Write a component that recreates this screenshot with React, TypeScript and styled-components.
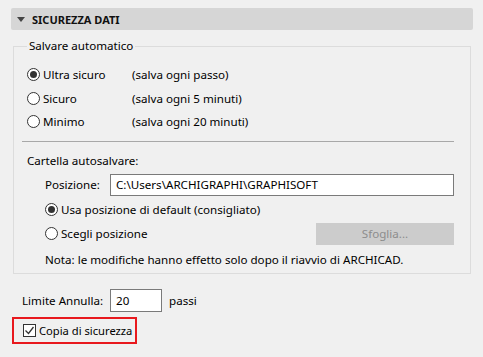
import styled, { createGlobalStyle } from 'styled-components';

const Global = createGlobalStyle`
    body {
        margin: 0;
        background: #f0f0f0;
        font-family: "Noto Sans", "Open Sans", sans-serif;
        font-size: 11.6px;
        color: #000;
    }
`;

const Page = styled.div`
    width: 483px;
    height: 357px;
    padding: 8px 10px 0 11px;
    box-sizing: border-box;
    white-space: nowrap;
`;

const SectionHeader = styled.div`
    height: 22px;
    background: #d6d6d6;
    border-radius: 2px;
    display: flex;
    align-items: center;
    gap: 7px;
    padding-left: 6px;
    font-weight: 700;
    font-size: 11px;
    color: #111;
    margin-bottom: 8px;
`;

const Group = styled.fieldset`
    margin: 0 2px 0 2px;
    padding: 0 16px 0 8px;
    border: 1px solid #dcdcdc;
    height: 236px;
    box-sizing: border-box;
    legend {
        margin-left: 5px;
        padding: 0 2px;
        line-height: 16px;
    }
`;

const OptionList = styled.div`
    display: flex;
    flex-direction: column;
    padding: 9px 0 0 5px;
`;

const OptionRow = styled.div`
    display: grid;
    grid-template-columns: 105px 1fr;
    align-items: center;
    height: 23.5px;
`;

const Choice = styled.label`
    display: flex;
    align-items: center;
    gap: 3px;
`;

const Dot = styled.span<{ $on?: boolean }>`
    width: 13px;
    height: 13px;
    border: 1px solid #333;
    border-radius: 50%;
    background: #fff;
    box-sizing: border-box;
    display: flex;
    align-items: center;
    justify-content: center;
    &::after {
        content: '';
        width: 7px;
        height: 7px;
        border-radius: 50%;
        background: ${p => (p.$on ? '#333' : 'transparent')};
    }
`;

const Divider = styled.div`
    height: 1px;
    background: #a8a8a8;
    margin: 7px 0 0 0;
`;

const SubTitle = styled.div`
    padding: 11px 0 0 5px;
    line-height: 16px;
`;

const FieldRow = styled.div`
    display: flex;
    align-items: center;
    padding-left: 23px;
    margin-top: 5px;
`;

const FieldLabel = styled.span<{ $w: number }>`
    width: ${p => p.$w}px;
    flex: none;
`;

const TextBox = styled.div<{ $w?: number }>`
    box-sizing: border-box;
    border: 1px solid #7a7a7a;
    background: #fff;
    display: flex;
    align-items: center;
    padding-left: 5px;
    flex: ${p => (p.$w ? 'none' : '1')};
    width: ${p => (p.$w ? `${p.$w}px` : 'auto')};
    height: ${p => (p.$w ? 23 : 22)}px;
`;

const ChoiceRow = styled.div`
    display: flex;
    align-items: center;
    justify-content: space-between;
    padding-left: 23px;
    height: 24px;
`;

const Browse = styled.div`
    width: 138px;
    height: 22px;
    background: #cccccc;
    color: #8c8c8c;
    display: flex;
    align-items: center;
    justify-content: center;
`;

const Note = styled.div`
    padding: 6px 0 0 23px;
    line-height: 16px;
`;

const UndoRow = styled.div`
    display: flex;
    align-items: center;
    padding: 15px 0 0 11px;
    span:last-child {
        margin-left: 7px;
    }
`;

const Highlight = styled.div`
    margin: 5px 0 0 1px;
    width: 125px;
    height: 27px;
    box-sizing: border-box;
    border: 2px solid #e8191e;
    display: flex;
    align-items: center;
    gap: 3px;
    padding-left: 9px;
    font-size: 11.2px;
`;

const Box = styled.span`
    width: 13px;
    height: 13px;
    border: 1px solid #333;
    background: #fff;
    box-sizing: border-box;
    display: flex;
    align-items: center;
    justify-content: center;
`;

const options = [
    { label: 'Ultra sicuro', hint: '(salva ogni passo)', on: true },
    { label: 'Sicuro', hint: '(salva ogni 5 minuti)', on: false },
    { label: 'Minimo', hint: '(salva ogni 20 minuti)', on: false }
];

export default function App() {
    return (
        <Page>
            <Global />
            <SectionHeader>
                <svg width="8" height="5" viewBox="0 0 8 5">
                    <path d="M0 0h8L4 5z" fill="#444" />
                </svg>
                SICUREZZA DATI
            </SectionHeader>
            <Group>
                <legend>Salvare automatico</legend>
                <OptionList>
                    {options.map(o => (
                        <OptionRow key={o.label}>
                            <Choice>
                                <Dot $on={o.on} />
                                {o.label}
                            </Choice>
                            <span>{o.hint}</span>
                        </OptionRow>
                    ))}
                </OptionList>
                <Divider />
                <SubTitle>Cartella autosalvare:</SubTitle>
                <FieldRow>
                    <FieldLabel $w={65}>Posizione:</FieldLabel>
                    <TextBox>C:\Users\ARCHIGRAPHI\GRAPHISOFT</TextBox>
                </FieldRow>
                <ChoiceRow style={{ marginTop: 2 }}>
                    <Choice>
                        <Dot $on />
                        Usa posizione di default (consigliato)
                    </Choice>
                </ChoiceRow>
                <ChoiceRow>
                    <Choice>
                        <Dot />
                        Scegli posizione
                    </Choice>
                    <Browse>Sfoglia...</Browse>
                </ChoiceRow>
                <Note>Nota: le modifiche hanno effetto solo dopo il riavvio di ARCHICAD.</Note>
            </Group>
            <UndoRow>
                <FieldLabel $w={88}>Limite Annulla:</FieldLabel>
                <TextBox $w={52}>20</TextBox>
                <span>passi</span>
            </UndoRow>
            <Highlight>
                <Box>
                    <svg width="11" height="11" viewBox="0 0 11 11">
                        <path d="M1.5 5.5l3 3 5-6.5" fill="none" stroke="#333" strokeWidth="1.3" />
                    </svg>
                </Box>
                Copia di sicurezza
            </Highlight>
        </Page>
    );
}
